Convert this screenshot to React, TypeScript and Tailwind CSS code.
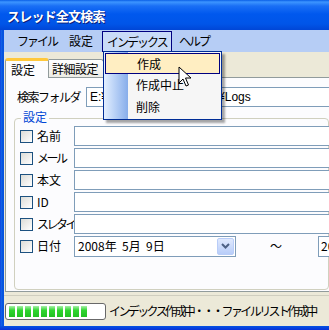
import React from 'react';

const jp = { fontFamily: '"Noto Sans CJK JP", "Noto Sans", sans-serif' };

const Check = () => (
  <div className="w-[13px] h-[13px] border border-[#1c5180] bg-gradient-to-br from-[#dcdcd7] to-white shrink-0" />
);

const Row = ({ label, kana }: { label: string; kana?: boolean }) => (
  <div className="flex items-center h-[22px]">
    <div className="w-[59px] shrink-0 flex items-center gap-[4px] pl-[5px]">
      <Check />
      <span className={`text-[12px] leading-none whitespace-nowrap ${kana ? 'tracking-[-2.5px]' : ''}`}>{label}</span>
    </div>
    <div className="h-[20px] w-[300px] border border-[#7f9db9] bg-white shrink-0" />
  </div>
);

const Cursor = () => (
  <svg width="14" height="22" viewBox="0 0 14 22" className="absolute left-[178px] top-[66px]">
    <path d="M1 1 L1 17 L5 13 L8 20 L10.5 19 L7.5 12 L13 12 Z" fill="white" stroke="black" strokeWidth="1" strokeLinejoin="miter" />
  </svg>
);

export default function App() {
  return (
    <div className="relative w-[329px] h-[330px] overflow-hidden bg-[#ece9d8] text-black" style={jp}>
      {/* title bar */}
      <div className="h-[30px] flex items-center pl-[7px] bg-[linear-gradient(to_bottom,#0a5fe6_0px,#3d95ff_2px,#1a6ff5_6px,#0058ee_14px,#0055e8_24px,#0046d6_30px)]">
        <span className="text-white font-bold text-[13px] leading-none tracking-[-0.8px] [text-shadow:1px_1px_#0a1e7a]">スレッド全文検索</span>
      </div>

      <div className="flex h-[296px]">
        {/* left frame */}
        <div className="w-[4px] shrink-0 bg-[linear-gradient(to_right,#0831d9,#166aee_1px,#0855dd_2px,#0553e3)]" />

        <div className="flex-1 flex flex-col min-w-0">
          {/* menu bar */}
          <div className="h-[22px] shrink-0 bg-[#b6cdf5] flex items-center text-[12px] whitespace-nowrap">
            <span className="ml-[13px] w-[52px] shrink-0 tracking-[-2px]">ファイル</span>
            <span className="w-[33px] shrink-0">設定</span>
            <div className="w-[70px] shrink-0 h-[21px] mt-[1px] self-start pl-[4px] border border-b-0 border-[#000080] bg-[#c9dbf8] flex items-center tracking-[-2px]">
              インデックス
            </div>
            <span className="ml-[7px] tracking-[-2px]">ヘルプ</span>
          </div>

          {/* tabs */}
          <div className="pt-[5px] pl-[1px] flex items-end h-[25px] shrink-0">
            <div className="w-[44px] shrink-0 h-[20px] bg-[#fcfcfe] border-x border-[#919b9c] border-t-[3px] border-t-[#ffc83c] rounded-t-[3px] flex items-center pl-[5px] text-[12px] relative z-10 -mb-[1px]">
              設定
            </div>
            <div className="w-[55px] shrink-0 h-[18px] bg-gradient-to-b from-white to-[#ecebe5] border-t border-r border-[#919b9c] rounded-tr-[3px] flex items-center pl-[3px] text-[12px] tracking-[-0.5px]">
              詳細設定
            </div>
          </div>

          {/* panel */}
          <div className="h-[215px] shrink-0 ml-[1px] bg-[#fcfcfe] border-t border-l border-b border-[#919b9c] pl-[11px] pt-[9px]">
            <div className="flex items-center h-[20px]">
              <span className="w-[69px] shrink-0 text-[12px] tracking-[-1.5px] whitespace-nowrap">検索フォルダ</span>
              <div className="h-[20px] w-[300px] border border-[#7f9db9] bg-white flex items-center pl-[3px] text-[12px] shrink-0 whitespace-nowrap" style={{ fontFamily: '"Liberation Sans", "Noto Sans CJK JP", sans-serif' }}>
                E:¥Apps¥ThreadSearch¥Logs
              </div>
            </div>

            {/* group box */}
            <div className="relative mt-[11px] -ml-[3px] h-[172px] border border-[#d0d0bf] rounded-[4px] pt-[6px]">
              <span className="absolute -top-[8px] left-[6px] px-[2px] bg-[#fcfcfe] text-[12px] leading-none text-[#0046d5]">設定</span>
              <Row label="名前" />
              <Row label="メール" kana />
              <Row label="本文" />
              <Row label="ID" />
              <Row label="スレタイ" kana />
              <div className="flex items-center h-[22px]">
                <div className="w-[59px] shrink-0 flex items-center gap-[4px] pl-[5px]">
                  <Check />
                  <span className="text-[12px] leading-none">日付</span>
                </div>
                <div className="h-[21px] w-[162px] border border-[#7f9db9] bg-white flex items-center pl-[3px] pr-[1px] shrink-0">
                  <span className="text-[12px] flex-1 whitespace-pre">2008年  5月  9日</span>
                  <div className="w-[17px] h-[17px] rounded-[2px] border border-[#b9cdf8] bg-gradient-to-b from-[#e0e9fd] to-[#b8cdf9] flex items-center justify-center">
                    <svg width="9" height="6" viewBox="0 0 9 6">
                      <path d="M1 1 L4.5 4.5 L8 1" fill="none" stroke="#4d6185" strokeWidth="2" />
                    </svg>
                  </div>
                </div>
                <span className="ml-[34px] text-[12px] shrink-0">～</span>
                <div className="ml-[36px] h-[21px] w-[100px] border border-[#7f9db9] bg-white flex items-center pl-[2px] text-[12px] shrink-0">2008</div>
              </div>
            </div>
          </div>

          {/* status bar */}
          <div className="flex-1 border-t border-[#d0cebf] mt-[3px] flex items-center">
            <div className="ml-[1px] w-[101px] h-[17px] shrink-0 border border-[#686868] rounded-[3px] bg-white flex items-center pl-[3px] gap-[2px]">
              {Array.from({ length: 10 }).map((_, i) => (
                <div key={i} className="w-[6px] h-[11px] bg-[linear-gradient(to_bottom,#a8f0a8,#2ed52e_40%,#22c022)]" />
              ))}
            </div>
            <span className="ml-[3px] text-[12px] whitespace-nowrap tracking-[-2.6px]">インデックス作成中・・・ ファイルリスト作成中</span>
          </div>
        </div>
      </div>

      {/* bottom frame */}
      <div className="h-[4px] bg-[linear-gradient(to_bottom,#0553e3,#0831d9)]" />

      {/* dropdown menu */}
      <div className="absolute left-[103px] top-[51px] w-[119px] h-[69px] border border-[#002d96] bg-[#f6f6f6] shadow-[3px_3px_2px_rgba(0,0,0,0.35)] flex">
        <div className="w-[24px] bg-gradient-to-r from-[#e3efff] to-[#87adea]" />
        <div className="absolute left-0 top-[1px] right-0 flex flex-col text-[12px]">
          <div className="h-[21px] mx-[1px] border border-[#000080] bg-[#ffeec2] flex items-center pl-[31px]">作成</div>
          <div className="h-[22px] flex items-center pl-[32px]">作成中止</div>
          <div className="h-[21px] flex items-center pl-[32px]">削除</div>
        </div>
      </div>

      <Cursor />
    </div>
  );
}
